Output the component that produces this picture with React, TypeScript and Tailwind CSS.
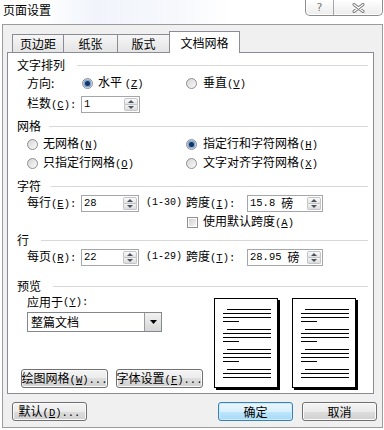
import React from "react";

function K({ k, pre = "", suf = "" }: { k: string; pre?: string; suf?: string }) {
  return (
    <span className="font-['Liberation_Mono',monospace] text-[10.5px]">
      {pre}(<span className="underline underline-offset-[1px]">{k}</span>){suf}
    </span>
  );
}

function Radio({ on }: { on?: boolean }) {
  return (
    <span className="w-[11px] h-[11px] shrink-0 rounded-full border border-[#8f8f8f] bg-[linear-gradient(135deg,#d4d4d4,#fbfbfb)] flex items-center justify-center">
      {on && <span className="w-[5px] h-[5px] rounded-full bg-[#16345f] shadow-[0_0_0_1.5px_#7ea6d6]" />}
    </span>
  );
}

function Check() {
  return (
    <span className="w-[11px] h-[11px] shrink-0 border border-[#8f8f8f] bg-white p-[1px]">
      <span className="block w-full h-full bg-[linear-gradient(135deg,#d0d0d0,#f6f6f6)]" />
    </span>
  );
}

function Spin() {
  return (
    <div className="h-full w-[16px] p-[1px] flex flex-col shrink-0">
      <div className="flex-1 flex items-center justify-center border border-[#c4c4c4] rounded-t-[2px] bg-[linear-gradient(#fbfbfb,#e3e3e3)]">
        <svg width="6" height="3" viewBox="0 0 6 3">
          <path d="M0 3 L3 0 L6 3Z" fill="#4a5462" />
        </svg>
      </div>
      <div className="flex-1 flex items-center justify-center border border-t-0 border-[#c4c4c4] rounded-b-[2px] bg-[linear-gradient(#f3f3f3,#dcdcdc)]">
        <svg width="6" height="3" viewBox="0 0 6 3">
          <path d="M0 0 L3 3 L6 0Z" fill="#4a5462" />
        </svg>
      </div>
    </div>
  );
}

function Num({ w, v, unit }: { w: string; v: string; unit?: boolean }) {
  return (
    <div className={`h-[17px] border border-[#a3a6ad] bg-white flex items-center ${w}`}>
      <span className="flex-1 pl-[2px] flex items-center">
        <span className="font-['Liberation_Mono',monospace] text-[10.5px]">{v}</span>
        {unit && <span className="ml-[6px]">磅</span>}
      </span>
      <Spin />
    </div>
  );
}

function Head({ t, mt, gap }: { t: string; mt: string; gap: string }) {
  return (
    <div className={`h-[14px] flex items-center pl-[9px] pr-[5px] ${mt}`}>
      <span>{t}</span>
      <div className={`flex-1 h-px bg-[#d8d8d8] ${gap}`} />
    </div>
  );
}

function Btn({ children, w, def }: { children: React.ReactNode; w: string; def?: boolean }) {
  return (
    <div
      className={`h-[19px] rounded-[3px] border flex items-center justify-center whitespace-nowrap overflow-hidden ${w} ${
        def
          ? "border-[#3c7fb1] bg-[linear-gradient(#eaf6fd,#d9f0fc_50%,#bee6fd_50%,#a7d9f5)] shadow-[inset_0_0_0_1px_#c9ecfa]"
          : "border-[#707070] bg-[linear-gradient(#f4f4f4,#ebebeb_50%,#dddddd_50%,#d0d0d0)] shadow-[inset_0_0_0_1px_#fbfbfb]"
      }`}
    >
      {children}
    </div>
  );
}

function Page() {
  const groups = [10, 30, 50, 70];
  return (
    <div className="w-[64px] h-[90px] border border-black bg-white shadow-[2px_2px_0_#000]">
      <svg width="62" height="88" viewBox="0 0 62 88">
        {groups.map((g, gi) => (
          <g key={g} fill="#000">
            <rect x="12" y={g} width="44" height="1" />
            <rect x="8" y={g + 4} width="48" height="1" />
            <rect x="8" y={g + 8} width="48" height="1" />
            {gi < 3 && <rect x="8" y={g + 12} width="16" height="1" />}
          </g>
        ))}
      </svg>
    </div>
  );
}

export default function App() {
  return (
    <div className="w-[384px] h-[430px] bg-white overflow-hidden font-['Noto_Sans_CJK_SC',sans-serif] text-[12px] leading-none text-black">
      {/* title bar */}
      <div className="h-[24px] flex items-start justify-between bg-[linear-gradient(90deg,#ffffff_10%,#f1f5fb_25%,#f6f8fc_45%,#ffffff_60%)]">
        <span className="pl-[3px] pt-[4px] text-[12px]">页面设置</span>
        <div className="mr-[1px] h-[16px] flex border border-t-0 border-[#8d8d8d] rounded-b-[5px] bg-[linear-gradient(#ffffff,#ececec)] shadow-[inset_0_0_0_1px_#ffffff]">
          <div className="w-[28px] flex items-center justify-center border-r border-[#a5a5a5] text-[11px] text-[#777] font-['DejaVu_Sans',sans-serif]">
            ?
          </div>
          <div className="w-[48px] flex items-center justify-center">
            <svg width="13" height="10" viewBox="0 0 13 10">
              <path d="M2 1.5 L11 8.5 M11 1.5 L2 8.5" stroke="#7b7b7b" strokeWidth="3" strokeLinecap="round" />
              <path d="M2 1.5 L11 8.5 M11 1.5 L2 8.5" stroke="#ffffff" strokeWidth="1.2" strokeLinecap="round" />
            </svg>
          </div>
        </div>
      </div>

      {/* frame */}
      <div className="ml-[2px] w-[381px] border border-[#9c9c9c] bg-[#f0f0f0] pt-[6px] pb-[6px]">
        {/* tabs */}
        <div className="relative z-10 flex items-end ml-[9px] h-[22px] -mb-px">
          <div className="w-[52px] h-[18px] mb-px border border-b-0 border-[#898c95] bg-[linear-gradient(#f6f6f6,#e4e4e4)] flex items-center justify-center">
            页边距
          </div>
          <div className="-ml-px w-[55px] h-[18px] mb-px border border-b-0 border-[#898c95] bg-[linear-gradient(#f6f6f6,#e4e4e4)] flex items-center justify-center">
            纸张
          </div>
          <div className="-ml-px w-[53px] h-[18px] mb-px border border-b-0 border-[#898c95] bg-[linear-gradient(#f6f6f6,#e4e4e4)] flex items-center justify-center">
            版式
          </div>
          <div className="-ml-px w-[71px] h-[22px] border border-b-0 border-[#898c95] bg-white flex items-center justify-center">
            文档网格
          </div>
        </div>

        {/* tab page */}
        <div className="ml-[4px] w-[367px] h-[342px] border border-[#898c95] bg-white flex flex-col">
          <Head t="文字排列" mt="mt-[5px]" gap="ml-[12px]" />
          <div className="mt-[2px] h-[18px] flex items-center pl-[19px]">
            <div className="w-[54px]">方向:</div>
            <div className="w-[105px] flex items-center gap-[5px] pl-[1px]">
              <Radio on />
              <span>
                水平 <K k="Z" />
              </span>
            </div>
            <div className="flex items-center gap-[6px]">
              <Radio />
              <span>
                垂直<K k="V" />
              </span>
            </div>
          </div>
          <div className="mt-[3px] h-[18px] flex items-center pl-[19px]">
            <div className="w-[54px]">
              栏数<K k="C" suf=":" />
            </div>
            <Num w="w-[59px]" v="1" />
          </div>

          <Head t="网格" mt="mt-[6px]" gap="ml-[8px]" />
          <div className="mt-[2px] h-[18px] flex items-center pl-[19px]">
            <div className="w-[159px] flex items-center gap-[5px]">
              <Radio />
              <span>
                无网格<K k="N" />
              </span>
            </div>
            <div className="flex items-center gap-[6px]">
              <Radio on />
              <span>
                指定行和字符网格<K k="H" />
              </span>
            </div>
          </div>
          <div className="mt-[1px] h-[18px] flex items-center pl-[19px]">
            <div className="w-[159px] flex items-center gap-[5px]">
              <Radio />
              <span>
                只指定行网格<K k="O" />
              </span>
            </div>
            <div className="flex items-center gap-[6px]">
              <Radio />
              <span>
                文字对齐字符网格<K k="X" />
              </span>
            </div>
          </div>

          <Head t="字符" mt="mt-[7px]" gap="ml-[10px]" />
          <div className="mt-[1px] h-[18px] flex items-center pl-[19px]">
            <div className="w-[54px]">
              每行<K k="E" suf=":" />
            </div>
            <div className="w-[105px] flex items-center">
              <Num w="w-[58px]" v="28" />
              <span className="ml-[7px] font-['Liberation_Mono',monospace] text-[10px]">(1-30)</span>
            </div>
            <div className="w-[61px]">
              跨度<K k="I" suf=":" />
            </div>
            <Num w="w-[76px]" v="15.8" unit />
          </div>
          <div className="mt-[1px] h-[18px] flex items-center pl-[19px]">
            <div className="w-[160px]" />
            <div className="flex items-center gap-[5px]">
              <Check />
              <span>
                使用默认跨度<K k="A" />
              </span>
            </div>
          </div>

          <Head t="行" mt="mt-[2px]" gap="ml-[12px]" />
          <div className="mt-[1px] h-[18px] flex items-center pl-[19px]">
            <div className="w-[54px]">
              每页<K k="R" suf=":" />
            </div>
            <div className="w-[105px] flex items-center">
              <Num w="w-[58px]" v="22" />
              <span className="ml-[7px] font-['Liberation_Mono',monospace] text-[10px]">(1-29)</span>
            </div>
            <div className="w-[61px]">
              跨度<K k="T" suf=":" />
            </div>
            <Num w="w-[76px]" v="28.95" unit />
          </div>

          <Head t="预览" mt="mt-[13px]" gap="ml-[12px]" />
          <div className="flex-1 flex">
            <div className="w-[206px] flex flex-col">
              <div className="mt-[1px] h-[16px] flex items-center pl-[19px]">
                应用于<K k="Y" suf=":" />
              </div>
              <div className="mt-[2px] ml-[19px] w-[135px] h-[20px] border border-[#828790] bg-white flex items-center">
                <span className="flex-1 pl-[3px]">整篇文档</span>
                <div className="w-[17px] h-full border-l border-[#9a9a9a] bg-[linear-gradient(#f2f2f2,#d6d6d6)] flex items-center justify-center">
                  <svg width="7" height="4" viewBox="0 0 7 4">
                    <path d="M0 0 L7 0 L3.5 4Z" fill="#000" />
                  </svg>
                </div>
              </div>
              <div className="mt-auto mb-[5px] flex gap-[8px] pl-[13px]">
                <Btn w="w-[87px]">
                  <span>
                    绘图网格<K k="W" suf="..." />
                  </span>
                </Btn>
                <Btn w="w-[87px]">
                  <span>
                    字体设置<K k="F" suf="..." />
                  </span>
                </Btn>
              </div>
            </div>
            <div className="mt-[5px] flex gap-[14px]">
              <Page />
              <Page />
            </div>
          </div>
        </div>

        {/* bottom buttons */}
        <div className="mt-[8px] h-[19px] flex pl-[9px] pr-[5px]">
          <Btn w="w-[75px]">
            <span>
              默认<K k="D" suf="..." />
            </span>
          </Btn>
          <div className="ml-auto flex gap-[9px]">
            <Btn w="w-[75px]" def>
              确定
            </Btn>
            <Btn w="w-[75px]">取消</Btn>
          </div>
        </div>
      </div>
    </div>
  );
}
